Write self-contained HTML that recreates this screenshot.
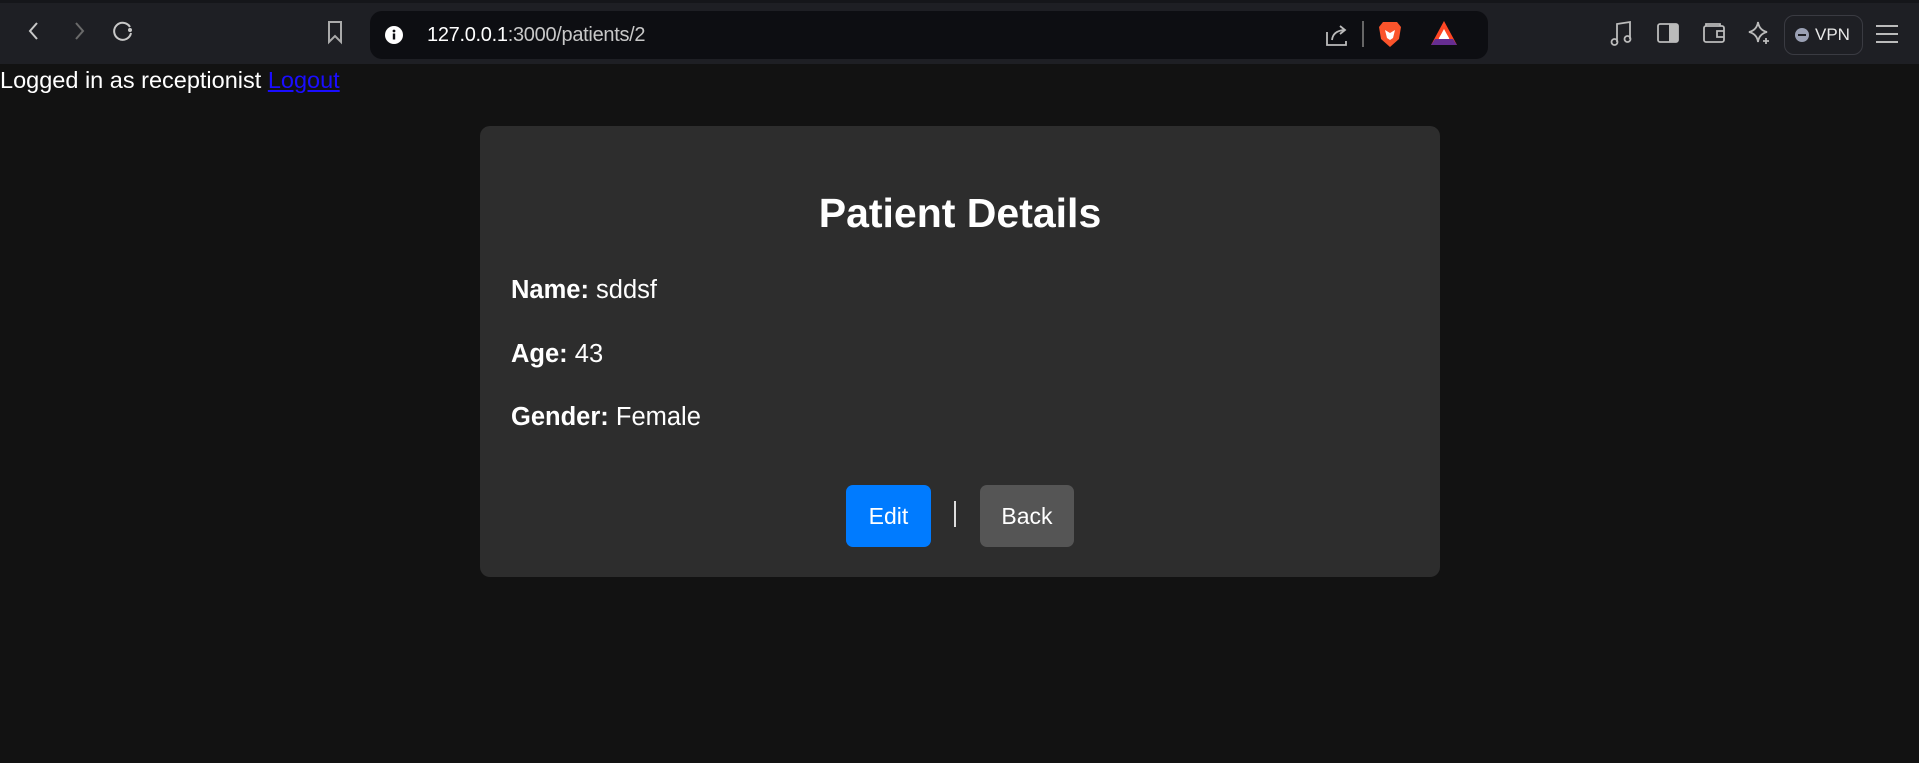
<!DOCTYPE html>
<html><head><meta charset="utf-8"><style>
*{margin:0;padding:0;box-sizing:border-box}
html,body{width:1919px;height:763px;overflow:hidden;background:#121212;font-family:"Liberation Sans",sans-serif;color:#fff}
.tb{position:absolute;left:0;top:0;width:1919px;height:64px;background:#1e1f24;border-top:3px solid #15161a}
.ic{position:absolute}
.addr{position:absolute;left:370px;top:8px;width:1118px;height:48px;background:#0d0e12;border-radius:12px}
.url{position:absolute;left:57px;top:13px;font-size:20px;color:#c8c8c8;letter-spacing:-0.3px}
.url b{font-weight:normal;color:#fff}
.vpn{position:absolute;left:1784px;top:12px;width:79px;height:40px;border:1.5px solid #3a3b42;border-radius:10px;font-size:17px;color:#e8e8e8}
.login{position:absolute;left:0;top:67px;font-size:23.5px;color:#fff}
.login a{color:#1a0dff;text-decoration:underline}
.card{position:absolute;left:480px;top:126px;width:960px;height:451px;background:#2d2d2d;border-radius:10px}
h1{position:absolute;left:0;width:960px;top:64px;text-align:center;font-size:41px;font-weight:bold}
.row{position:absolute;left:31px;font-size:25.5px}
.btn{position:absolute;top:359px;height:62px;border-radius:7px;font-size:23px;line-height:62px;text-align:center;color:#fff}
</style></head><body>
<div class="tb">
<svg class="ic" style="left:22px;top:16px" width="24" height="24" viewBox="0 0 24 24"><path d="M15 4 L8 12 L15 20" fill="none" stroke="#c8c8c8" stroke-width="2"/></svg>
<svg class="ic" style="left:67px;top:16px" width="24" height="24" viewBox="0 0 24 24"><path d="M9 4 L16 12 L9 20" fill="none" stroke="#6a6a6a" stroke-width="2"/></svg>
<svg class="ic" style="left:110px;top:15px" width="26" height="26" viewBox="0 0 26 26"><path d="M20 9 A8.5 8.5 0 1 0 21 15" fill="none" stroke="#c8c8c8" stroke-width="2"/><circle cx="20" cy="12" r="2" fill="#c8c8c8"/></svg>
<svg class="ic" style="left:324px;top:16px" width="22" height="26" viewBox="0 0 22 26"><path d="M5 3 H17 V23 L11 17 L5 23 Z" fill="none" stroke="#aaa" stroke-width="2"/></svg>
<div class="addr">
<svg class="ic" style="left:14px;top:14px" width="20" height="20" viewBox="0 0 20 20"><circle cx="10" cy="10" r="9" fill="#fff"/><rect x="8.8" y="8.5" width="2.4" height="6" fill="#0d0e12"/><circle cx="10" cy="6" r="1.4" fill="#0d0e12"/></svg>
<div class="url"><b>127.0.0.1</b>:3000/patients/2</div>
<svg class="ic" style="left:954px;top:11px" width="26" height="26" viewBox="0 0 26 26"><path d="M3 10 V23 H22 V19" fill="none" stroke="#bbb" stroke-width="1.8"/><path d="M8 18 Q9 9 20 8 M16 4 L21 8 L16 12" fill="none" stroke="#bbb" stroke-width="1.8"/></svg>
<div class="ic" style="left:992px;top:10px;width:2px;height:26px;background:#666"></div>
<svg class="ic" style="left:1008px;top:9px" width="24" height="28" viewBox="0 0 24 28"><path d="M5 2 H19 L23 7 L21 19 L12 27 L3 19 L1 7 Z" fill="#fb542b"/><path d="M7 10 L12 13 L17 10 L15 18 L12 20 L9 18 Z" fill="#fff"/></svg>
<svg class="ic" style="left:1060px;top:9px" width="28" height="26" viewBox="0 0 28 26"><path d="M14 1 L27 25 H1 Z" fill="#ff4724"/><path d="M14 9 L21 22 H7 Z" fill="#fff"/><path d="M1 25 H27 L23 19 H5 Z" fill="#662d91"/><path d="M9 18 L14 10 L19 18 Z" fill="#fff"/></svg>
</div>
<svg class="ic" style="left:1610px;top:17px" width="24" height="28" viewBox="0 0 24 28"><path d="M7 22 V4 L20 2 V19" fill="none" stroke="#bbb" stroke-width="1.8"/><circle cx="4.5" cy="22" r="3" fill="none" stroke="#bbb" stroke-width="1.8"/><circle cx="17.5" cy="19" r="3" fill="none" stroke="#bbb" stroke-width="1.8"/></svg>
<svg class="ic" style="left:1656px;top:18px" width="24" height="24" viewBox="0 0 24 24"><rect x="2" y="3" width="20" height="18" rx="2" fill="none" stroke="#bbb" stroke-width="1.8"/><rect x="13" y="3" width="9" height="18" fill="#bbb"/></svg>
<svg class="ic" style="left:1702px;top:18px" width="24" height="24" viewBox="0 0 24 24"><rect x="2" y="5" width="20" height="16" rx="2" fill="none" stroke="#bbb" stroke-width="1.8"/><path d="M4 5 V3 H18 V5 M22 10 H15 V16 H22" fill="none" stroke="#bbb" stroke-width="1.8"/></svg>
<svg class="ic" style="left:1746px;top:17px" width="26" height="26" viewBox="0 0 26 26"><path d="M12 2 Q13 10 21 12 Q13 14 12 22 Q11 14 3 12 Q11 10 12 2 Z" fill="none" stroke="#bbb" stroke-width="1.8"/><path d="M20 18 V24 M17 21 H23" stroke="#bbb" stroke-width="1.8"/></svg>
<div class="vpn"><div style="position:absolute;left:10px;top:12px;width:14px;height:14px;border-radius:50%;background:#9aa0b4"></div><div style="position:absolute;left:13px;top:18px;width:8px;height:2px;background:#1e1f24"></div><span style="position:absolute;left:30px;top:9px">VPN</span></div>
<svg class="ic" style="left:1875px;top:20px" width="24" height="22" viewBox="0 0 24 22"><path d="M1 3 H23 M1 11 H23 M1 19 H23" stroke="#bbb" stroke-width="2"/></svg>
</div>
<div class="login">Logged in as receptionist <a>Logout</a></div>
<div class="card">
<h1>Patient Details</h1>
<div class="row" style="top:150px"><b>Name:</b> sddsf</div>
<div class="row" style="top:214px"><b>Age:</b> 43</div>
<div class="row" style="top:277px"><b>Gender:</b> Female</div>
<div class="btn" style="left:366px;width:85px;background:#007bff">Edit</div>
<div style="position:absolute;left:474px;top:375px;width:2px;height:26px;background:#ddd"></div>
<div class="btn" style="left:500px;width:94px;background:#555">Back</div>
</div>
</body></html>
